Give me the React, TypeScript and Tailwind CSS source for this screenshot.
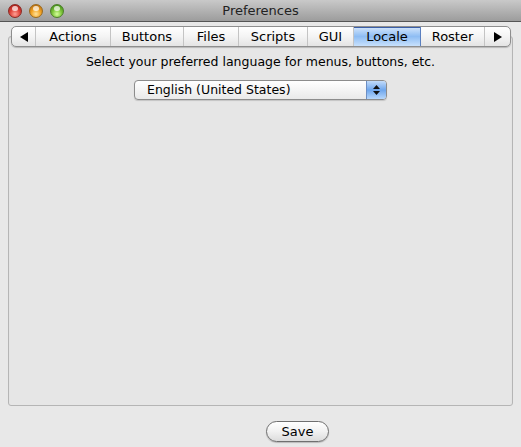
import React from 'react'

const tabs = ['Actions', 'Buttons', 'Files', 'Scripts', 'GUI', 'Locale', 'Roster']
const widths: Record<string, string> = {
  Actions: 'w-[75px]',
  Buttons: 'w-[73px]',
  Files: 'w-[55px]',
  Scripts: 'w-[69px]',
  GUI: 'w-[46px]',
  Locale: 'w-[67px]',
  Roster: 'w-[64px]',
}

function Light({ color }: { color: 'red' | 'yellow' | 'green' }) {
  const bg =
    color === 'red'
      ? 'bg-[radial-gradient(circle_at_50%_75%,#ffa095_0%,#e0443a_45%,#9b1410_100%)] border-[#8a2a24]'
      : color === 'yellow'
      ? 'bg-[radial-gradient(circle_at_50%_75%,#ffe39a_0%,#f2a324_45%,#a35a08_100%)] border-[#9a6a1e]'
      : 'bg-[radial-gradient(circle_at_50%_75%,#d6ff9a_0%,#7cc43a_45%,#2f7a10_100%)] border-[#4e7f2a]'
  return (
    <div className={`relative h-[14px] w-[14px] shrink-0 rounded-full border ${bg}`}>
      <div className="absolute left-[3px] top-[1px] h-[5px] w-[6px] rounded-full bg-white/70" />
    </div>
  )
}

export default function App() {
  return (
    <div
      className="flex h-[447px] w-[521px] flex-col bg-[#e8e8e8] text-[13px] text-black"
      style={{ fontFamily: '"DejaVu Sans", "Liberation Sans", sans-serif' }}
    >
      {/* title bar */}
      <div className="relative flex h-[22px] items-center border-b border-[#555] bg-gradient-to-b from-[#c9c9c9] to-[#9c9c9c] px-[8px]">
        <div className="flex gap-[7px]">
          <Light color="red" />
          <Light color="yellow" />
          <Light color="green" />
        </div>
        <div className="absolute inset-0 flex items-center justify-center text-[13px] text-[#222]">Preferences</div>
      </div>

      {/* tabs + panel */}
      <div className="relative px-[8px] pt-[14px]">
        <div className="h-[370px] rounded-[3px] border border-[#b5b5b5] bg-[#e6e6e6] shadow-[inset_0_1px_1px_rgba(0,0,0,0.08)]">
          <div className="flex flex-col items-center pt-[17px]">
            <div className="text-[12.5px] leading-[16px]">Select your preferred language for menus, buttons, etc.</div>
            <div className="mt-[10px] flex h-[20px] w-[253px] overflow-hidden rounded-[4px] border border-[#8c8c8c] bg-gradient-to-b from-white to-[#e9e9e9] shadow-[0_1px_1px_rgba(0,0,0,0.15)]">
              <div className="flex flex-1 items-center pl-[12px] text-[12.5px]">English (United States)</div>
              <div className="flex w-[20px] flex-col items-center justify-center gap-[2px] border-l border-[#6d8fc4] bg-gradient-to-b from-[#c3dcfa] via-[#6ea6ec] to-[#b7d7fb]">
                <svg width="7" height="4" viewBox="0 0 7 4"><path d="M3.5 0 L7 4 L0 4 Z" fill="#111" /></svg>
                <svg width="7" height="4" viewBox="0 0 7 4"><path d="M0 0 L7 0 L3.5 4 Z" fill="#111" /></svg>
              </div>
            </div>
          </div>
        </div>

        <div className="absolute left-[11px] top-[4px] flex h-[21px] w-[500px] overflow-hidden rounded-[5px] border border-[#8e8e8e] bg-gradient-to-b from-white via-[#f4f4f4] to-[#e4e4e4] shadow-[0_1px_1px_rgba(0,0,0,0.2)]">
          <div className="flex w-[24px] items-center justify-center border-r border-[#c4c4c4]">
            <svg width="8" height="10" viewBox="0 0 8 10"><path d="M8 0 L8 10 L0 5 Z" fill="#000" /></svg>
          </div>
          {tabs.map((t) => (
            <div
              key={t}
              className={`flex items-center justify-center border-r text-[13px] ${widths[t]} ${
                t === 'Locale'
                  ? 'border-[#5a7fbf] bg-gradient-to-b from-[#d4e6fb] via-[#8ebdf3] to-[#c8e1fc] shadow-[inset_0_1px_0_#3b5fa8]'
                  : 'border-[#c4c4c4]'
              }`}
            >
              {t}
            </div>
          ))}
          <div className="flex flex-1 items-center justify-center">
            <svg width="8" height="10" viewBox="0 0 8 10"><path d="M0 0 L0 10 L8 5 Z" fill="#000" /></svg>
          </div>
        </div>
      </div>

      {/* footer */}
      <div className="flex flex-1 items-start pl-[266px] pt-[15px]">
        <button className="h-[21px] w-[63px] rounded-full border border-[#6f6f6f] bg-gradient-to-b from-white via-[#f1f1f1] to-[#dcdcdc] text-[13px] leading-[19px] shadow-[0_1px_1px_rgba(0,0,0,0.2)]">
          Save
        </button>
      </div>
    </div>
  )
}
